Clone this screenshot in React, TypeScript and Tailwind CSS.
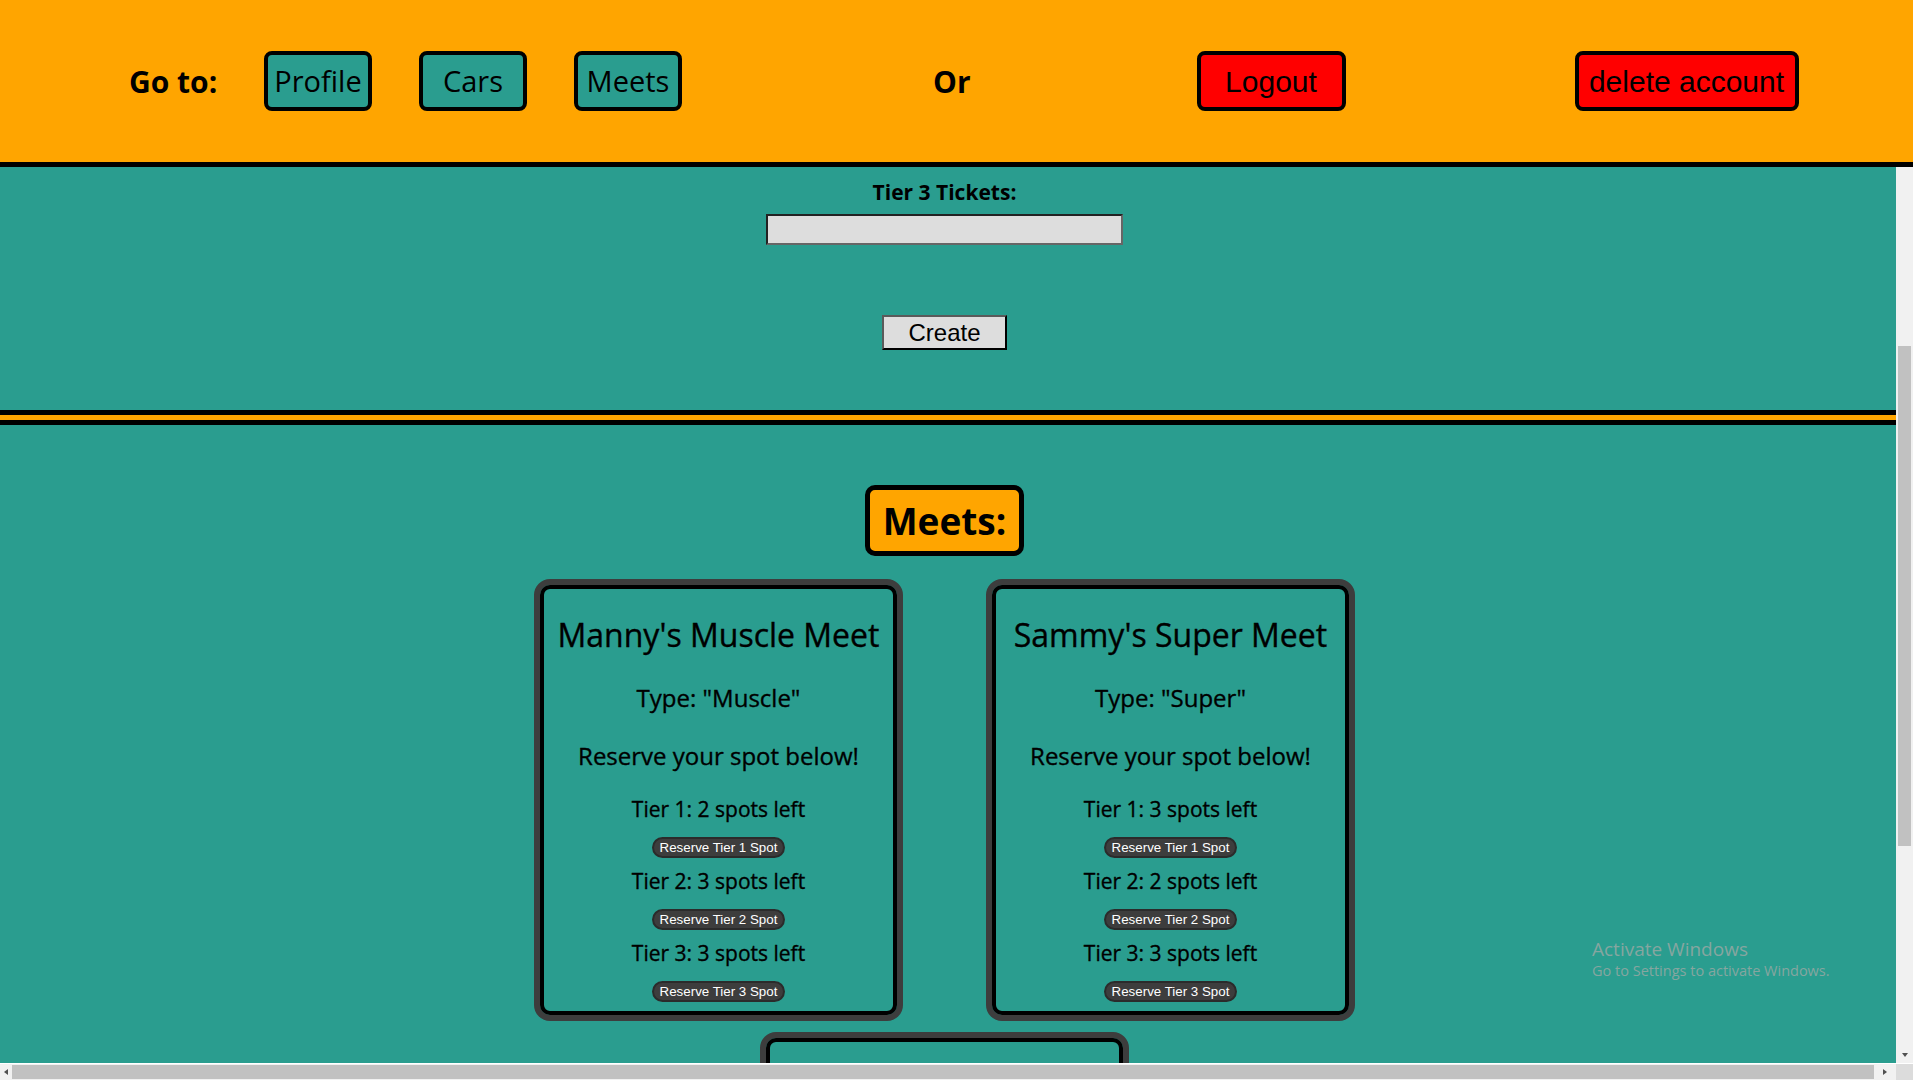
type Meet = {
  name: string;
  type: string;
  tiers: number[];
};

const meets: Meet[] = [
  { name: "Manny's Muscle Meet", type: "Muscle", tiers: [2, 3, 3] },
  { name: "Sammy's Super Meet", type: "Super", tiers: [3, 2, 3] },
  { name: "Tony's Tuner Meet", type: "Tuner", tiers: [4, 4, 2] },
];

const MeetCard = ({ meet }: { meet: Meet }) => {
  return (
    <div className="w-[369px] rounded-[16px] border-[6px] border-[#3d3d3d]">
      <div className="flex flex-col items-center rounded-[10px] border-4 border-black pt-[25.5px] pb-[9px] text-center font-medium [-webkit-text-stroke:0.35px_black]">
        <h3 className="text-[32px] leading-[40px] whitespace-nowrap">{meet.name}</h3>
        <p className="mt-[27px] text-[24px] leading-[32px]">Type: "{meet.type}"</p>
        <p className="mt-[26px] text-[24px] leading-[32px]">Reserve your spot below!</p>
        <div className="mt-[23px] flex flex-col items-center">
          {meet.tiers.map((left, i) => (
            <div key={i} className={`flex flex-col items-center ${i > 0 ? "mt-[9px]" : ""}`}>
              <p className="text-[21px] leading-[28px]">
                Tier {i + 1}: {left} spots left
              </p>
              <button className="mt-[14px] rounded-full border-2 border-[#2b2b2b] bg-[#3d3d3d] px-[6px] py-[1px] font-['Liberation_Sans',Arial,sans-serif] text-[13.33px] leading-[normal] font-normal text-white [-webkit-text-stroke:0]">
                Reserve Tier {i + 1} Spot
              </button>
            </div>
          ))}
        </div>
      </div>
    </div>
  );
};

const App = () => {
  return (
    <div className="relative flex h-screen flex-col overflow-hidden text-black">
      <header className="flex h-[167px] shrink-0 items-center border-b-[5px] border-black bg-[#ffa500] pl-[129px] font-['Open_Sans',sans-serif]">
        <span className="w-[88px] text-[30px] font-bold whitespace-nowrap">Go to:</span>
        <nav className="ml-[47px] flex gap-[47px]">
          {["Profile", "Cars", "Meets"].map((label) => (
            <button
              key={label}
              className="h-[60px] w-[108px] rounded-lg border-4 border-black bg-[#2a9d8f] text-[29px]"
            >
              {label}
            </button>
          ))}
        </nav>
        <span className="ml-[251px] text-[30px] font-bold">Or</span>
        <button className="ml-[226px] h-[60px] w-[149px] rounded-lg border-4 border-black bg-[#ff0000] font-['Liberation_Sans',Arial,sans-serif] text-[30px]">
          Logout
        </button>
        <button className="ml-[229px] h-[60px] w-[224px] rounded-lg border-4 border-black bg-[#ff0000] font-['Liberation_Sans',Arial,sans-serif] text-[30px] whitespace-nowrap">
          delete account
        </button>
      </header>

      <div className="flex min-h-0 flex-1">
        <main className="min-w-0 flex-1 overflow-hidden bg-[#2a9d8f] font-['Open_Sans',sans-serif]">
          <form className="flex flex-col items-center border-b-[5px] border-black pt-[11px] pr-[7px] pb-[60px]">
            <label className="block text-[21px] leading-[28px] font-bold">Tier 3 Tickets:</label>
            <input className="mt-[8px] h-[31px] w-[357px] border-2 border-t-[#222] border-l-[#222] border-b-[#666] border-r-[#666] bg-[#dddddd] px-1 text-[16px]" />
            <button
              type="button"
              className="mt-[70px] h-[35px] w-[125px] border-2 border-t-[#5a5a5a] border-l-[#5a5a5a] border-b-black border-r-black bg-[#dddddd] font-['Liberation_Sans',Arial,sans-serif] text-[24px] leading-none"
            >
              Create
            </button>
          </form>
          <div className="h-[5px] bg-[#ffa500]" />
          <section className="flex flex-col items-center border-t-[5px] border-black pt-[60px] pr-[7px] pb-[40px]">
            <h2 className="flex h-[71px] w-[159px] items-center justify-center rounded-[10px] border-[5px] border-black bg-[#ffa500] text-[37px] font-bold">
              Meets:
            </h2>
            <div className="mt-[23px] flex w-[900px] flex-wrap justify-center gap-x-[83px] gap-y-[11px]">
              {meets.map((m) => (
                <MeetCard key={m.name} meet={m} />
              ))}
            </div>
          </section>
        </main>

        {/* vertical scrollbar */}
        <div className="flex w-[17px] shrink-0 flex-col bg-[#f1f1f1]">
          <div className="h-[179px]" />
          <div className="ml-[2px] h-[500px] w-[13px] bg-[#c1c1c1]" />
          <div className="flex-1" />
          <div className="flex h-[17px] items-start justify-center pt-[7px]">
            <div className="h-0 w-0 border-x-[3.5px] border-t-[4px] border-x-transparent border-t-[#505050]" />
          </div>
        </div>
      </div>

      {/* horizontal scrollbar */}
      <div className="flex h-[17px] shrink-0 border-t border-white">
        <div className="flex flex-1 bg-[#f1f1f1]">
          <div className="flex w-[12px] items-center justify-center">
            <div className="h-0 w-0 border-y-[3.5px] border-r-[4px] border-y-transparent border-r-[#505050]" />
          </div>
          <div className="mt-[1px] h-[14px] flex-1 bg-[#c1c1c1]" />
          <div className="flex w-[22px] items-center justify-center">
            <div className="h-0 w-0 border-y-[3.5px] border-l-[4px] border-y-transparent border-l-[#505050]" />
          </div>
        </div>
        <div className="w-[17px] bg-[#dcdcdc]" />
      </div>

      <div className="pointer-events-none absolute top-[936px] left-[1592px] font-['Open_Sans',sans-serif] text-[#86a6a0]">
        <p className="text-[19px] leading-[26px]">Activate Windows</p>
        <p className="text-[14.5px] leading-[18px]">Go to Settings to activate Windows.</p>
      </div>
    </div>
  );
};

export default App;
